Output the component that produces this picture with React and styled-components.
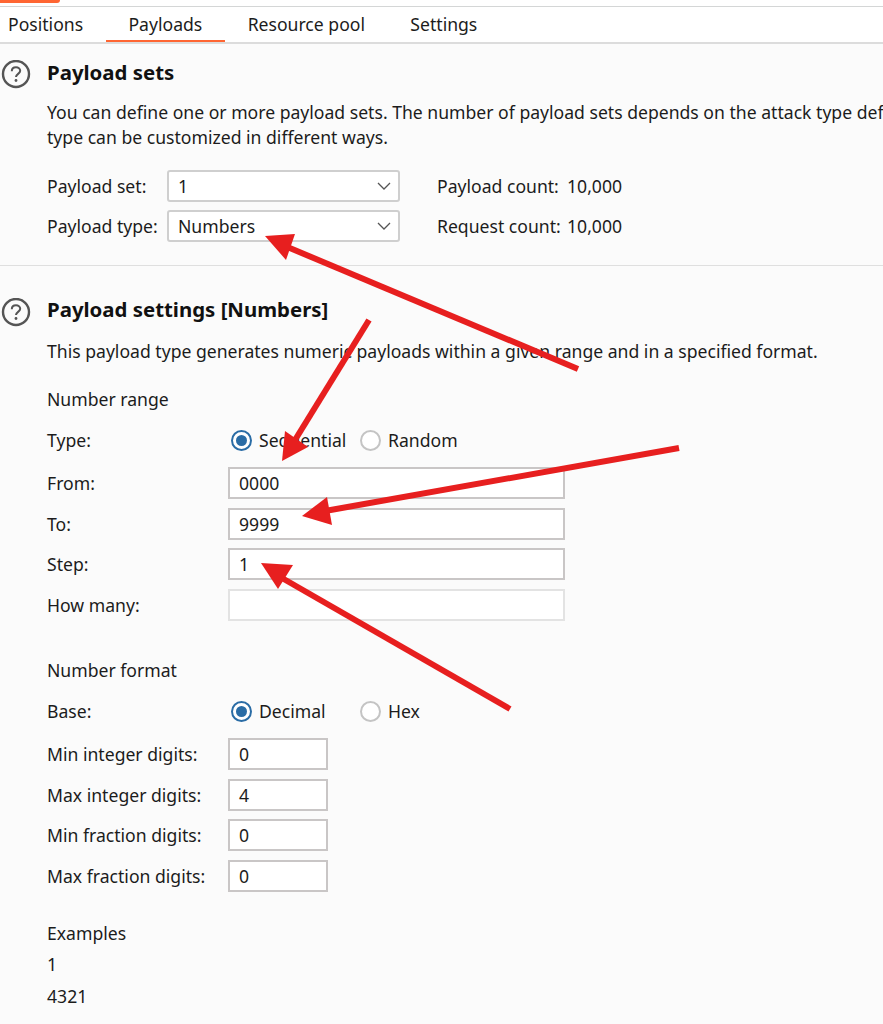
import React from 'react';
import styled, { createGlobalStyle } from 'styled-components';

const GlobalStyle = createGlobalStyle`
  html, body { margin: 0; padding: 0; background: #fbfbfb; }
  body { font-family: "Noto Sans", "Open Sans", sans-serif; font-size: 17.6px; color: #1c1c1c; }
`;

const Page = styled.div`
  position: relative;
  width: 883px;
  height: 1024px;
  overflow: hidden;
  background: #fbfbfb;
`;

const TopStrip = styled.div`
  height: 6px;
  background: #fff;
  border-bottom: 1px solid #d4d6d6;
`;

const AccentTab = styled.div`
  width: 60px;
  height: 3px;
  background: #ff6633;
  border-bottom-right-radius: 3px;
`;

const TabBar = styled.div`
  display: flex;
  height: 35px;
  padding-left: 8px;
  background: #fff;
  border-bottom: 2px solid #dcdcdc;
`;

const Tab = styled.div`
  height: 35px;
  box-sizing: border-box;
  padding: 0 22.7px;
  line-height: 35px;
  white-space: nowrap;
  border-bottom: 2px solid ${p => (p.$active ? '#ff6633' : 'transparent')};
  &:first-child { padding-left: 0; }
`;

const Section = styled.section`
  padding-left: 47px;
  padding-top: ${p => p.$top}px;
  padding-bottom: ${p => p.$bottom}px;
  border-bottom: ${p => (p.$rule ? '1px solid #dfdfdf' : 'none')};
`;

const Heading = styled.h2`
  position: relative;
  margin: 0;
  font-size: 20.4px;
  font-weight: 700;
  line-height: 28px;
  color: #111;
`;

const HelpBadge = styled.svg`
  position: absolute;
  left: -46px;
  top: ${p => p.$top}px;
`;

const Desc = styled.p`
  margin: ${p => p.$top}px 0 0;
  line-height: 25px;
  white-space: nowrap;
`;

const SetGrid = styled.div`
  display: grid;
  grid-template-columns: 120px 233px 37px auto;
  grid-auto-rows: 32px;
  row-gap: 8px;
  align-items: center;
  margin-top: 20px;
`;

const Select = styled.div`
  display: flex;
  align-items: center;
  justify-content: space-between;
  height: 32px;
  box-sizing: border-box;
  padding: 0 7px 0 9px;
  background: #fff;
  border: 2px solid #cfcfcf;
  border-radius: 3px;
`;

const Count = styled.div`
  grid-column: 4;
  display: flex;
  white-space: nowrap;
`;

const CountLabel = styled.span`
  width: 130px;
`;

const Group = styled.div`
  margin-top: ${p => p.$top}px;
  line-height: 24px;
`;

const Form = styled.div`
  display: grid;
  grid-template-columns: 181px auto;
  grid-auto-rows: 32px;
  row-gap: 8.6px;
  align-items: center;
  justify-content: start;
  margin-top: ${p => p.$top}px;
`;

const RadioRow = styled.div`
  display: flex;
  height: 24px;
  align-items: center;
  margin-top: ${p => p.$top}px;
`;

const RadioLabel = styled.div`
  width: 181px;
`;

const RadioOption = styled.div`
  display: flex;
  align-items: center;
  gap: 7px;
  width: 129px;
  height: 24px;
`;

const RadioCircle = styled.span`
  display: inline-flex;
  align-items: center;
  justify-content: center;
  width: 21px;
  height: 21px;
  box-sizing: border-box;
  flex: none;
  margin-left: 3px;
  background: #fff;
  border-radius: 50%;
  border: ${p => (p.$checked ? '2px solid #2a6ca5' : '2px solid #c4c4c4')};
  &::after {
    content: '';
    display: ${p => (p.$checked ? 'block' : 'none')};
    width: 11px;
    height: 11px;
    background: #2a6ca5;
    border-radius: 50%;
  }
`;

const Field = styled.div`
  width: ${p => p.$width}px;
  height: 32px;
  box-sizing: border-box;
  padding-left: 9px;
  line-height: 28px;
  background: #fff;
  border: 2px solid ${p => (p.$disabled ? '#e3e3e3' : '#c9c6c6')};
`;

const Examples = styled.div`
  margin-top: ${p => p.$top}px;
  line-height: 24px;
`;

const ExampleLine = styled.div`
  margin-top: ${p => p.$top}px;
`;

const ArrowLayer = styled.svg`
  position: absolute;
  inset: 0;
  pointer-events: none;
`;

const Chevron = () => (
  <svg width="14" height="8" viewBox="0 0 14 8" fill="none" stroke="#555" strokeWidth="1.3">
    <path d="M1 1l6 6 6-6" />
  </svg>
);

const Help = ({ top }) => (
  <HelpBadge $top={top} width="30" height="30" viewBox="0 0 30 30" fill="none">
    <circle cx="15" cy="14" r="13" stroke="#555" strokeWidth="2.4" />
    <path d="M10.8 11.2c0-2.5 1.9-3.9 4.2-3.9s4.200 1.400 4.200 3.500c0 3-4.200 3.100-4.200 6.200" stroke="#555" strokeWidth="2" />
    <circle cx="15" cy="20.500" r="1.400" fill="#555" />
  </HelpBadge>
);

const Radio = ({ label, checked }) => (
  <RadioOption>
    <RadioCircle $checked={checked} />
    <span>{label}</span>
  </RadioOption>
);

const arrows = [
  { line: [578, 369, 285, 246], head: '265,236 295,234 286,260' },
  { line: [369, 320, 295, 440], head: '282,461 285,431 308,447' },
  { line: [679, 448, 325, 511], head: '302,516 327,497 332,525' },
  { line: [510, 709, 275, 574], head: '261,563 293,565 278,589' },
];

const rangeRows = [
  { label: 'From:', value: '0000' },
  { label: 'To:', value: '9999' },
  { label: 'Step:', value: '1' },
  { label: 'How many:', value: '', disabled: true },
];

const formatRows = [
  { label: 'Min integer digits:', value: '0' },
  { label: 'Max integer digits:', value: '4' },
  { label: 'Min fraction digits:', value: '0' },
  { label: 'Max fraction digits:', value: '0' },
];

const App = () => {
  return (
    <Page>
      <GlobalStyle />
      <TopStrip><AccentTab /></TopStrip>
      <TabBar>
        <Tab>Positions</Tab>
        <Tab $active>Payloads</Tab>
        <Tab>Resource pool</Tab>
        <Tab>Settings</Tab>
      </TabBar>

      <Section $top={14} $bottom={23} $rule>
        <Heading><Help top={2} />Payload sets</Heading>
        <Desc $top={14}>You can define one or more payload sets. The number of payload sets depends on the attack type defined in the Positions tab.</Desc>
        <Desc $top={0}>type can be customized in different ways.</Desc>
        <SetGrid>
          <div>Payload set:</div>
          <Select>1<Chevron /></Select>
          <Count><CountLabel>Payload count:</CountLabel><span>10,000</span></Count>
          <div>Payload type:</div>
          <Select>Numbers<Chevron /></Select>
          <Count><CountLabel>Request count:</CountLabel><span>10,000</span></Count>
        </SetGrid>
      </Section>

      <Section $top={29} $bottom={0}>
        <Heading><Help top={3} />Payload settings [Numbers]</Heading>
        <Desc $top={16}>This payload type generates numeric payloads within a given range and in a specified format.</Desc>

        <Group $top={23}>Number range</Group>
        <RadioRow $top={17}>
          <RadioLabel>Type:</RadioLabel>
          <Radio label="Sequential" checked />
          <Radio label="Random" />
        </RadioRow>
        <Form $top={15}>
          {rangeRows.map(r => (
            <React.Fragment key={r.label}>
              <div>{r.label}</div>
              <Field $width={337} $disabled={r.disabled}>{r.value}</Field>
            </React.Fragment>
          ))}
        </Form>

        <Group $top={37.400}>Number format</Group>
        <RadioRow $top={17}>
          <RadioLabel>Base:</RadioLabel>
          <Radio label="Decimal" checked />
          <Radio label="Hex" />
        </RadioRow>
        <Form $top={15}>
          {formatRows.map(r => (
            <React.Fragment key={r.label}>
              <div>{r.label}</div>
              <Field $width={100}>{r.value}</Field>
            </React.Fragment>
          ))}
        </Form>

        <Examples $top={29.400}>
          Examples
          <ExampleLine $top={7}>1</ExampleLine>
          <ExampleLine $top={8}>4321</ExampleLine>
        </Examples>
      </Section>

      <ArrowLayer width="883" height="1024" viewBox="0 0 883 1024">
        {arrows.map((a, i) => (
          <g key={i}>
            <line x1={a.line[0]} y1={a.line[1]} x2={a.line[2]} y2={a.line[3]} stroke="#e71f1f" strokeWidth="6" />
            <polygon points={a.head} fill="#e71f1f" />
          </g>
        ))}
      </ArrowLayer>
    </Page>
  );
};

export default App;
